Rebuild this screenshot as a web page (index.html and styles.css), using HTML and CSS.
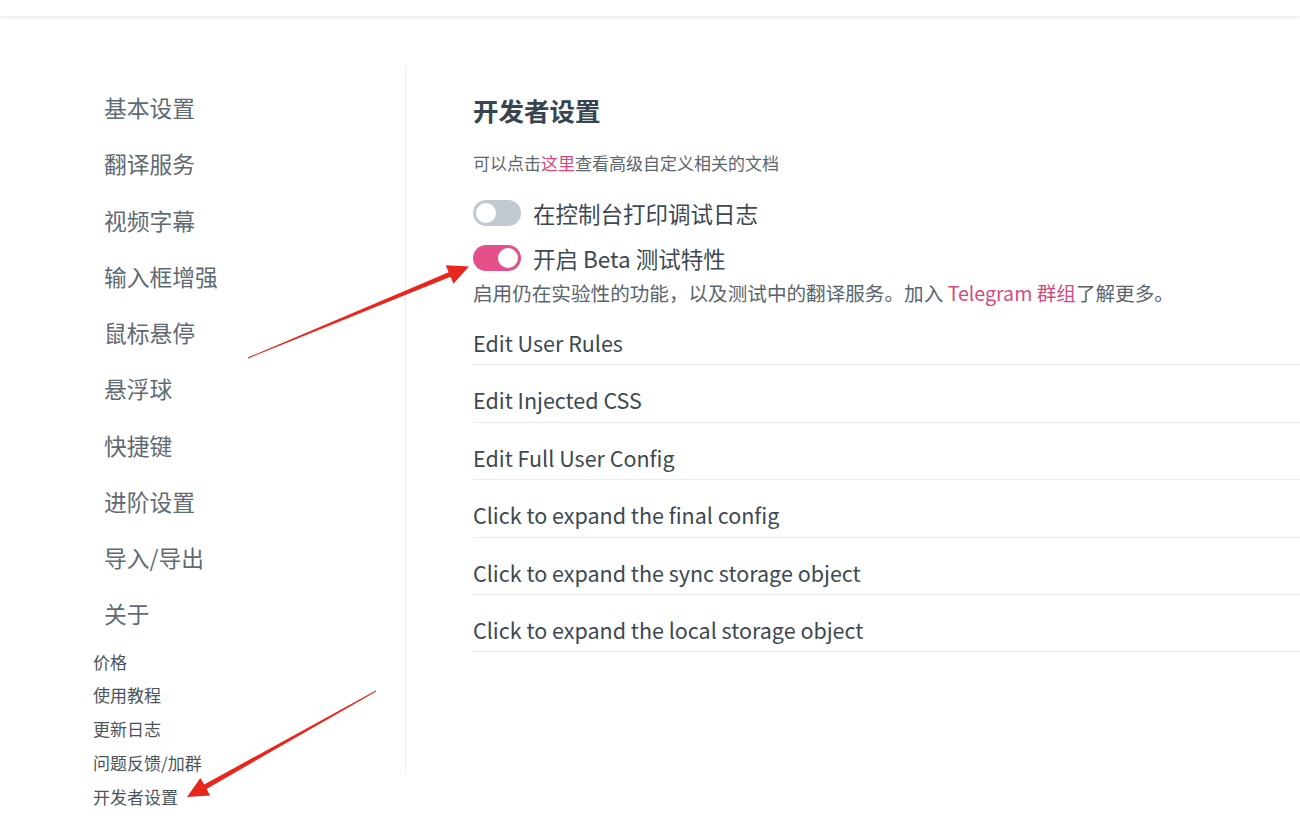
FILE: index.html
```html
<!DOCTYPE html>
<html lang="zh-CN">
<head>
<meta charset="utf-8">
<title>开发者设置</title>
<link rel="stylesheet" href="styles.css">
</head>
<body>
<header class="topbar"></header>
<div class="layout">
  <aside class="sidebar">
    <nav class="nav-main">
      <a class="nav-item">基本设置</a>
      <a class="nav-item">翻译服务</a>
      <a class="nav-item">视频字幕</a>
      <a class="nav-item">输入框增强</a>
      <a class="nav-item">鼠标悬停</a>
      <a class="nav-item">悬浮球</a>
      <a class="nav-item">快捷键</a>
      <a class="nav-item">进阶设置</a>
      <a class="nav-item">导入/导出</a>
      <a class="nav-item">关于</a>
    </nav>
    <nav class="nav-sub">
      <a class="sub-item">价格</a>
      <a class="sub-item">使用教程</a>
      <a class="sub-item">更新日志</a>
      <a class="sub-item">问题反馈/加群</a>
      <a class="sub-item">开发者设置</a>
    </nav>
  </aside>
  <main class="content">
    <h1 class="title">开发者设置</h1>
    <p class="subtitle">可以点击<a class="link">这里</a>查看高级自定义相关的文档</p>
    <div class="switch-row">
      <span class="switch"><span class="knob"></span></span>
      <span class="switch-label">在控制台打印调试日志</span>
    </div>
    <div class="switch-row">
      <span class="switch on"><span class="knob"></span></span>
      <span class="switch-label">开启 Beta 测试特性</span>
    </div>
    <p class="desc">启用仍在实验性的功能，以及测试中的翻译服务。加入 <a class="link">Telegram 群组</a>了解更多。</p>
    <ul class="list">
      <li class="list-row">Edit User Rules</li>
      <li class="list-row">Edit Injected CSS</li>
      <li class="list-row">Edit Full User Config</li>
      <li class="list-row">Click to expand the final config</li>
      <li class="list-row">Click to expand the sync storage object</li>
      <li class="list-row">Click to expand the local storage object</li>
    </ul>
  </main>
</div>
<svg class="arrows" width="1300" height="821" viewBox="0 0 1300 821">
  <polygon fill="#e8261c" points="247.8,357.6 448.6,272.2 445.8,265.3 469,266.5 453.4,283.7 450.6,276.8 248.2,358.4"/>
  <polygon fill="#e8261c" points="375.8,690.6 204.1,784.5 200.4,778 187,797 210.2,795.4 206.5,788.9 376.2,691.4"/>
</svg>
</body>
</html>
```

FILE: styles.css
```css
* { box-sizing: border-box; }
html, body { margin: 0; padding: 0; background: #fff; }
body {
  font-family: "Noto Sans CJK SC", "Noto Sans", sans-serif;
  color: #3b4650;
  width: 1300px;
  height: 821px;
  overflow: hidden;
  position: relative;
}
.topbar {
  height: 16px;
  background: #fff;
  box-shadow: 0 1px 4px rgba(0,0,0,0.10);
  position: relative;
  z-index: 1;
}
.layout {
  display: flex;
  margin-top: 51px;
}
.sidebar {
  width: 406px;
  height: 705px;
  border-right: 1px solid #ececec;
  padding-top: 13px;
  flex-shrink: 0;
}
.nav-main { display: flex; flex-direction: column; padding-left: 104px; }
.nav-item {
  height: 56.25px;
  line-height: 56.25px;
  font-size: 22.75px;
  color: #5f6a73;
}
.nav-sub { display: flex; flex-direction: column; padding-left: 93px; padding-top: 2px; }
.sub-item {
  height: 33.8px;
  line-height: 33.8px;
  font-size: 17px;
  color: #4a545d;
}
.content {
  flex: 1;
  padding-left: 67px;
  padding-top: 26px;
}
.title {
  margin: 0;
  font-size: 25.5px;
  line-height: 34px;
  font-weight: 700;
  color: #38454f;
}
.subtitle {
  margin: 24px 0 0;
  font-size: 17px;
  line-height: 24px;
  color: #5d666e;
}
.link { color: #d44a7f; }
.switch-row {
  display: flex;
  align-items: center;
  gap: 12px;
  height: 34px;
  margin-top: 21px;
}
.switch-row + .switch-row { margin-top: 11px; }
.switch {
  width: 48px;
  height: 26px;
  border-radius: 13px;
  background: #c2c9d1;
  position: relative;
  flex-shrink: 0;
}
.switch .knob {
  position: absolute;
  top: 3px;
  left: 3px;
  width: 20px;
  height: 20px;
  border-radius: 50%;
  background: #fff;
}
.switch.on { background: #e5508a; }
.switch.on .knob { left: 25px; }
.switch-label {
  font-size: 22.5px;
  color: #3d4852;
}
.desc {
  margin: 5px 0 0;
  font-size: 19.6px;
  line-height: 26px;
  color: #5a646c;
}
.list {
  list-style: none;
  margin: 2px 0 0;
  padding: 0;
}
.list-row {
  padding: 24px 0 10px;
  line-height: 22.4px;
  font-size: 21.5px;
  color: #3d4852;
  border-bottom: 1px solid #ebebeb;
}
.arrows {
  position: absolute;
  left: 0;
  top: 0;
  pointer-events: none;
}
```
